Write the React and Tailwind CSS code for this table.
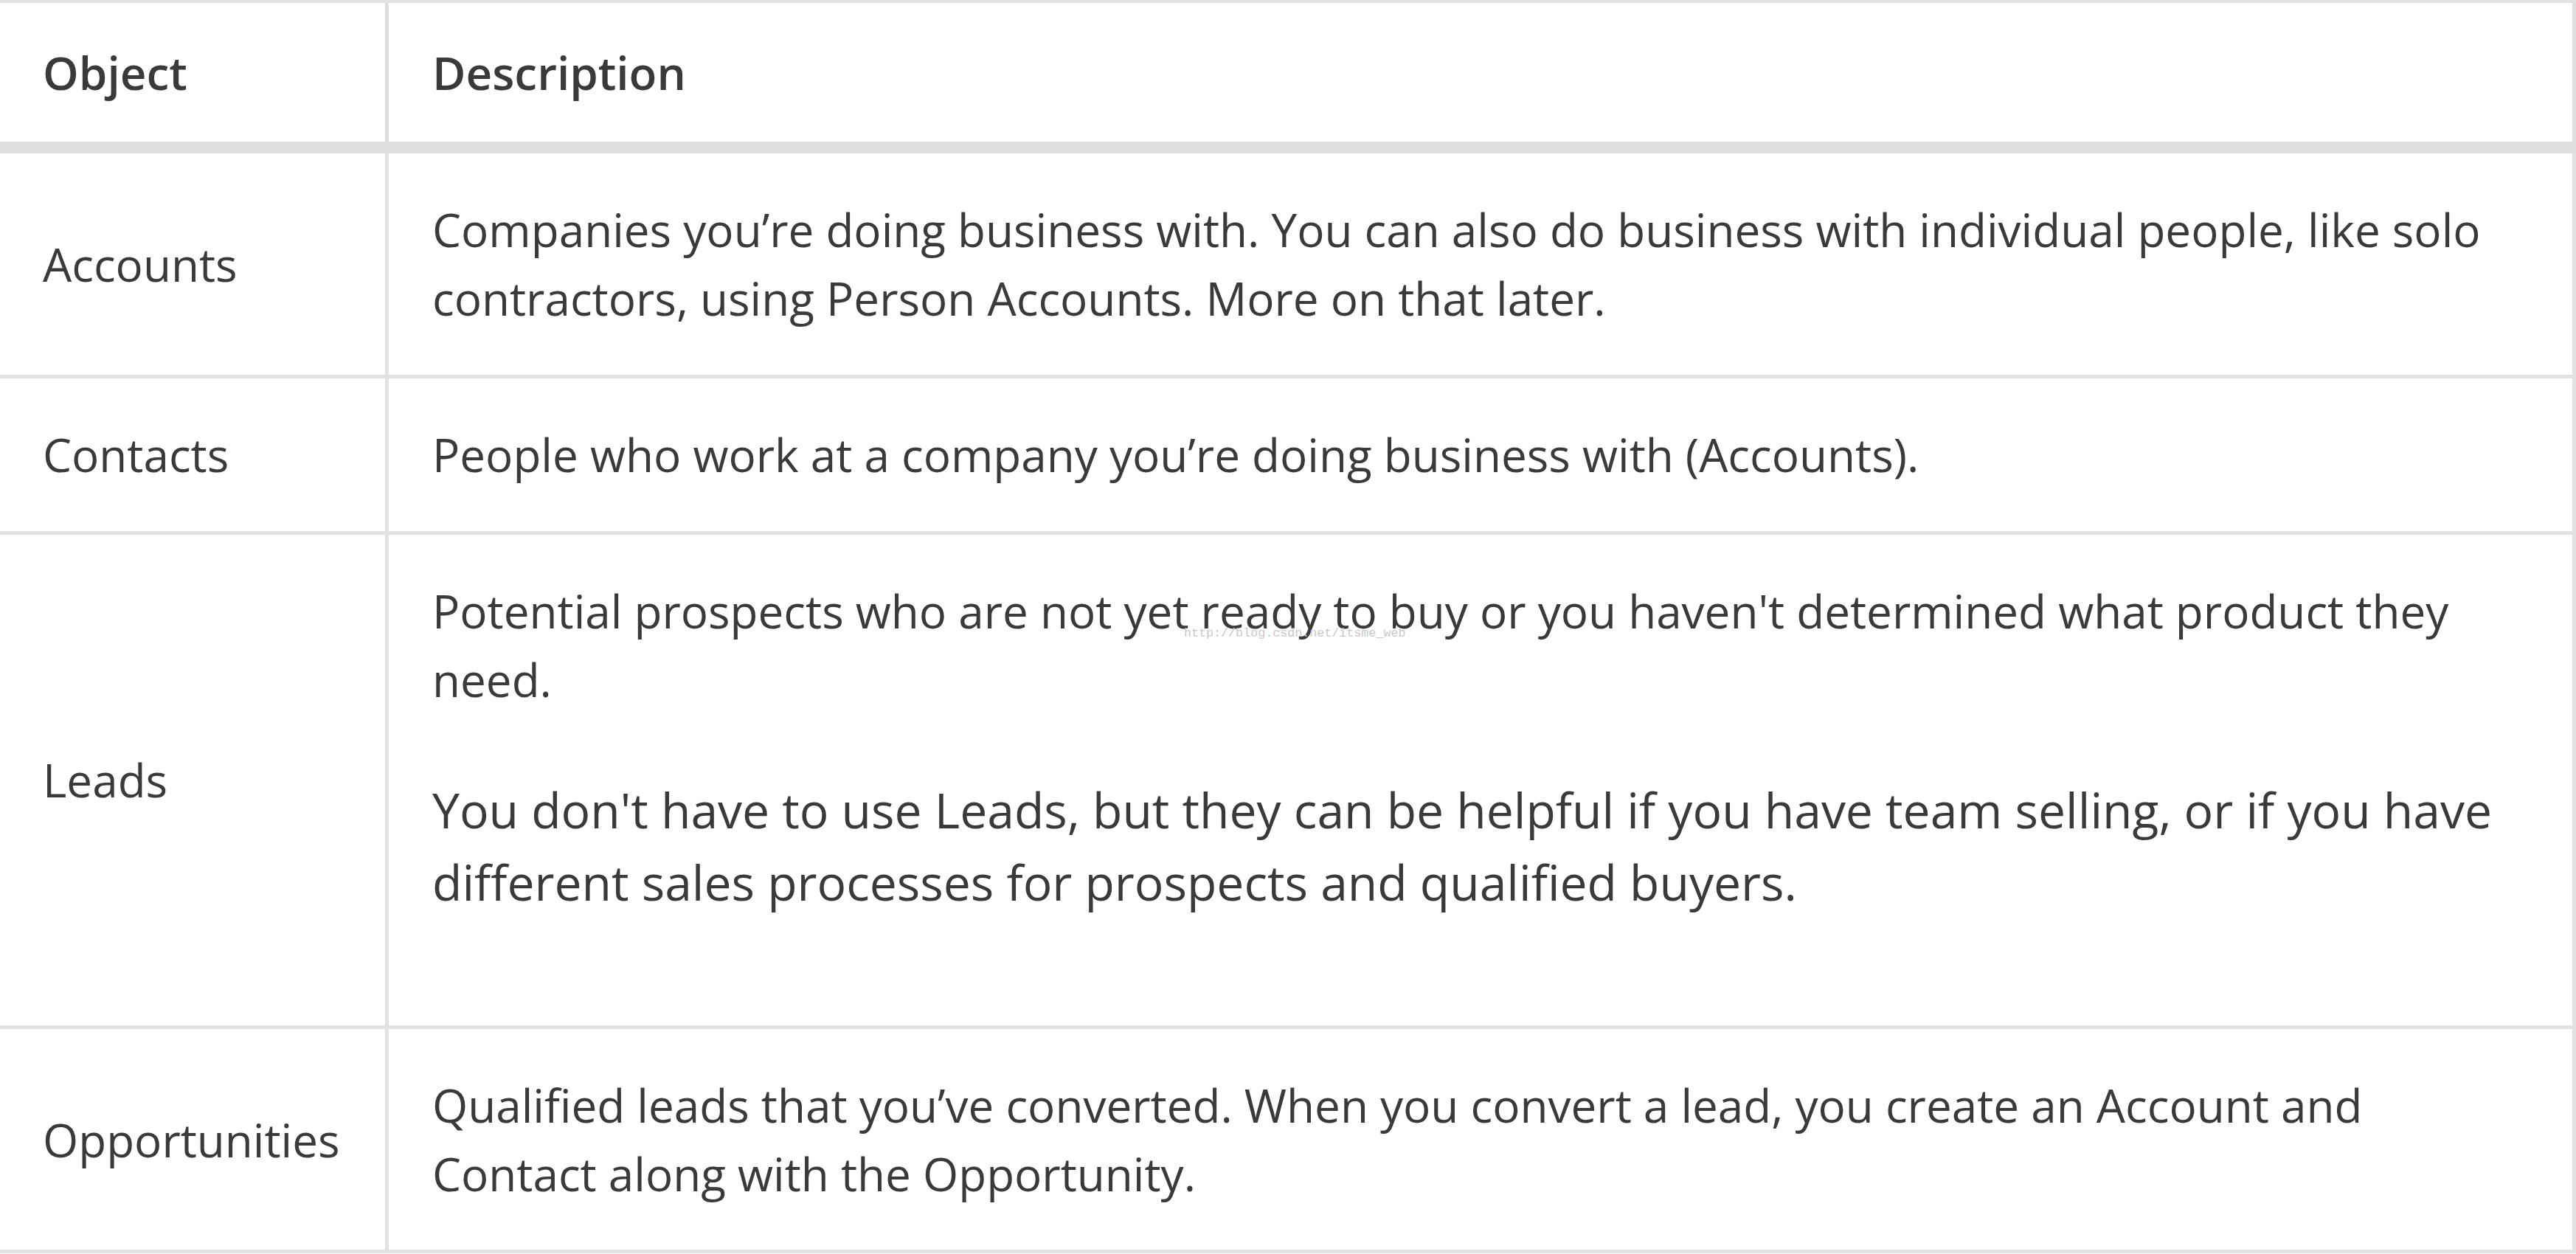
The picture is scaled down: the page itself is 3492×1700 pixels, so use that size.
const rows = [
  {
    name: 'Accounts',
    body: [
      'Companies you’re doing business with. You can also do business with individual people, like solo contractors, using Person Accounts. More on that later.',
    ],
  },
  {
    name: 'Contacts',
    body: ['People who work at a company you’re doing business with (Accounts).'],
  },
  {
    name: 'Leads',
    body: [
      "Potential prospects who are not yet ready to buy or you haven't determined what product they need.",
      "You don't have to use Leads, but they can be helpful if you have team selling, or if you have different sales processes for prospects and qualified buyers.",
    ],
  },
  {
    name: 'Opportunities',
    body: [
      'Qualified leads that you’ve converted. When you convert a lead, you create an Account and Contact along with the Opportunity.',
    ],
  },
];

const App = () => {
  return (
    <div className="relative w-[3492px] h-[1700px] overflow-hidden bg-white font-['Open_Sans',sans-serif] text-[62px] leading-[93px] text-[#3a3a3a]">
      <div className="grid grid-cols-[527px_1fr] border-t-4 border-[#e2e2e2]">
        {/* Header */}
        <div className="flex items-center border-r-[5px] border-b-[16px] border-[#dedede] pl-[58px] pt-[48px] pb-[47px] font-semibold">
          Object
        </div>
        <div className="flex items-center border-r-[5px] border-b-[16px] border-[#dedede] pl-[59px] pr-[58px] pt-[48px] pb-[47px] font-semibold">
          Description
        </div>

        {/* Rows */}
        {rows.map((row, i) => {
          const last = i === rows.length - 1;
          return [
            <div
              key={row.name + '-name'}
              className={`flex items-center border-r-[5px] border-b-[5px] border-[#e2e2e2] pl-[58px] pr-[20px] ${last ? 'pt-[57px] pb-[56px]' : 'py-[57px]'}`}
            >
              {row.name}
            </div>,
            <div
              key={row.name + '-body'}
              className={`border-r-[5px] border-b-[5px] border-[#e2e2e2] pl-[59px] pr-[58px] ${last ? 'pt-[57px] pb-[56px]' : 'py-[57px]'}`}
            >
              {row.body.length === 1 ? (
                <p>{row.body[0]}</p>
              ) : (
                <>
                  <p className="mb-[80px]">{row.body[0]}</p>
                  <p className="mb-[89px] text-[66px] leading-[98px]">{row.body[1]}</p>
                </>
              )}
            </div>,
          ];
        })}
      </div>

      {/* watermark */}
      <div className="absolute left-[1605px] top-[849px] font-['Liberation_Mono',monospace] text-[16.7px] leading-[20px] text-[#c9c9c9]">
        http://blog.csdn.net/itsme_web
      </div>
    </div>
  );
};

export default App;
